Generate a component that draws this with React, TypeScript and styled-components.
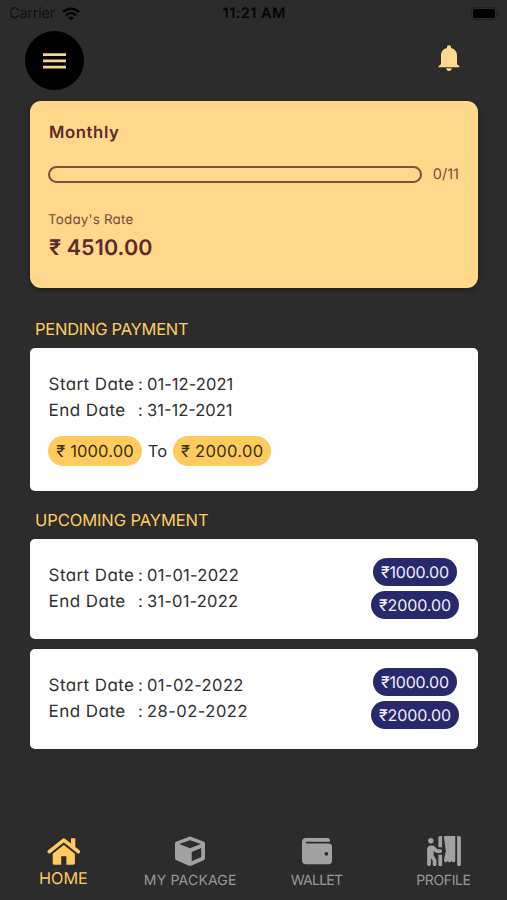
import React from 'react';
import styled, { createGlobalStyle } from 'styled-components';
import { FaPersonBooth, FaWallet } from 'react-icons/fa';

const GlobalStyle = createGlobalStyle`
  *, *::before, *::after { box-sizing: border-box; }
  body {
    margin: 0;
    background: #2c2c2c;
    font-family: Inter, 'Open Sans', sans-serif;
    font-feature-settings: 'cv11';
    text-rendering: geometricPrecision;
  }
`;

const Screen = styled.div`
  display: flex;
  flex-direction: column;
  width: 507px;
  height: 900px;
  overflow: hidden;
  background: #2c2c2c;
  color: #303030;
  white-space: pre;
`;

/* Text run with its own tracking; the trailing gap is cancelled. */
const Tracked = styled.span<{ $ls: number }>`
  letter-spacing: ${(p) => p.$ls}px;
  margin-right: ${(p) => -p.$ls}px;
`;

const StatusBar = styled.div`
  display: grid;
  grid-template-columns: 1fr auto 1fr;
  align-items: center;
  height: 27px;
  padding: 0 8px 0 9px;
  color: #050505;
  font-size: 14.5px;
  font-feature-settings: normal;
`;

const Carrier = styled.div`
  display: flex;
  align-items: center;
  gap: 7px;
  color: #111;
`;

const Clock = styled.div`
  font-size: 14.5px;
  font-weight: 600;
`;

const BatterySlot = styled.div`
  display: flex;
  justify-content: flex-end;
`;

const Header = styled.header`
  display: flex;
  justify-content: space-between;
  height: 74px;
  padding: 4px 47px 0 25px;
`;

const MenuButton = styled.button`
  display: flex;
  align-items: center;
  justify-content: center;
  width: 59px;
  height: 59px;
  padding: 0;
  border: 0;
  border-radius: 50%;
  background: #000;
`;

const BellButton = styled.button`
  display: flex;
  align-items: flex-start;
  height: 59px;
  padding: 14px 0 0;
  border: 0;
  background: none;
`;

const Content = styled.main`
  display: flex;
  flex-direction: column;
  padding: 0 29px 0 30px;
`;

const PlanCard = styled.section`
  display: flex;
  flex-direction: column;
  height: 187px;
  padding: 19px 19px 0 18px;
  border-radius: 11px;
  background: #ffd88c;
  color: #5c2a2b;
  box-shadow: 0 2px 5px rgba(0, 0, 0, 0.35);
`;

const PlanName = styled.h1`
  margin: 0;
  padding: 1px 0 0 1px;
  font-size: 16.7px;
  font-weight: 600;
  line-height: 24px;
`;

const ProgressRow = styled.div`
  display: flex;
  align-items: center;
  justify-content: space-between;
  height: 20px;
  margin-top: 19px;
`;

const ProgressTrack = styled.div`
  width: 374px;
  height: 17px;
  border: 2px solid #81503a;
  border-radius: 9px;
`;

const ProgressCount = styled.span`
  color: #7b4a3c;
  font-size: 14.5px;
`;

const RateLabel = styled.div`
  margin-top: 26px;
  color: #7b4a3c;
  font-size: 13.4px;
  line-height: 20px;
`;

const RateValue = styled.div`
  margin-top: 2px;
  padding-left: 1px;
  font-size: 21.5px;
  font-weight: 600;
  line-height: 32px;
`;

const SectionTitle = styled.h2<{ $top: number }>`
  margin: ${(p) => p.$top}px 0 0;
  padding: 0 0 6px 5px;
  color: #fdcc60;
  font-size: 16.5px;
  font-weight: 400;
  line-height: 25px;
`;

const PaymentCard = styled.section<{ $height: number }>`
  display: flex;
  justify-content: space-between;
  height: ${(p) => p.$height}px;
  padding: 23px 19px 0 18px;
  border-radius: 5px;
  background: #fff;

  & + & { margin-top: 10px; }
`;

const Dates = styled.dl`
  display: grid;
  grid-template-columns: 90px 9px auto;
  grid-auto-rows: 26px;
  align-content: start;
  margin: 0;
  font-size: 16.5px;
  line-height: 26px;
`;

const Term = styled.dt`
  margin: 0;
  padding: 1px 0 0 0.6px;
  font-size: 17px;
`;

const DateValue = styled.dd`
  margin: 0;
`;

const RangeRow = styled.div`
  display: flex;
  align-items: center;
  margin-top: 13px;
  font-size: 16.5px;
`;

const Joiner = styled.span`
  width: 31px;
  text-align: center;
`;

const AmountPill = styled.span<{ $width: number }>`
  display: flex;
  align-items: center;
  justify-content: center;
  width: ${(p) => p.$width}px;
  height: 30px;
  border-radius: 15px;
  background: #ffcb5c;
  color: #3d3018;
`;

const PillStack = styled.div`
  display: flex;
  flex-direction: column;
  align-items: center;
  gap: 5px;
  margin-top: -4px;
`;

const DuePill = styled.span<{ $width: number }>`
  display: flex;
  align-items: center;
  justify-content: center;
  width: ${(p) => p.$width}px;
  height: 28px;
  border-radius: 14px;
  background: #28286c;
  color: #f0effa;
  font-size: 16px;
`;

const TabBar = styled.nav`
  display: grid;
  grid-template-columns: repeat(4, 1fr);
  height: 64px;
  margin-top: auto;
`;

const Tab = styled.a<{ $active?: boolean }>`
  display: flex;
  flex-direction: column;
  align-items: center;
  gap: ${(p) => (p.$active ? 2 : 5)}px;
  color: ${(p) => (p.$active ? '#ffca60' : '#989898')};
  font-size: ${(p) => (p.$active ? 16.2 : 14)}px;
  line-height: 20px;

  svg {
    width: 34px;
    height: 30px;
    color: ${(p) => (p.$active ? '#ffca60' : '#a2a2a2')};
  }
`;

const WifiIcon = () => (
  <svg width="18" height="14" viewBox="0 0 18 14" fill="none" stroke="#050505">
    <path d="M1 5.1C5.5.7 12.5.7 17 5.1" strokeWidth="2.5" />
    <path d="M4 8.3c2.9-2.8 7.1-2.8 10 0" strokeWidth="2.3" />
    <path d="M9 13.6 6.1 10.7c1.7-1.6 4.1-1.6 5.8 0Z" fill="#050505" stroke="none" />
  </svg>
);

const BatteryIcon = () => (
  <svg width="29" height="13" viewBox="0 0 29 13">
    <rect x="1.500" y=".5" width="25" height="12" rx="3" fill="none" stroke="#222" />
    <rect x="3" y="2" width="22" height="9" rx="1.5" fill="#000" />
    <path d="M27.500 4.5c1.700.7 1.700 3.300 0 4Z" fill="#222" />
  </svg>
);

const MenuIcon = () => (
  <svg width="23" height="16" viewBox="0 0 23 16" fill="#f8d589">
    <path d="M0 .2h23v2.7H0zM0 6.5h23v2.7H0zM0 12.8h23v2.7H0z" />
  </svg>
);

const BellIcon = () => (
  <svg width="22" height="27" viewBox="0 0 22 27" fill="#ffd98f">
    <path d="M11 .3c1.300 0 2 .8 2 2v.7c3.800.9 6 3.700 6 7.500v7.500c0 1 .3 1.500 1 2.100l1.500 1.200v.9H.5v-.9L2 20.100c.7-.6 1-1.100 1-2.100v-7.500C3 6.700 5.200 3.900 9 3v-.7c0-1.200.7-2 2-2Z" />
    <path d="M8.200 23.200h5.600c-.2 1.800-1.200 2.700-2.800 2.700s-2.600-.9-2.800-2.700Z" />
  </svg>
);

const HomeIcon = () => (
  <svg viewBox="-0.8 -0.2 34 30" fill="currentColor">
    <path d="M2.500 15.400 17 3.900l14.500 11.500" fill="none" stroke="currentColor" strokeWidth="3.700" strokeLinejoin="round" strokeLinecap="round" />
    <path d="M24.200 2.100h4.300v9.800l-4.300-3.400Z" />
    <path d="M17 8.700 28.100 17.500v9.600q0 1.400-1.400 1.400h-7.100V20h-5.200v8.500H7.300q-1.400 0-1.400-1.400v-9.600Z" />
  </svg>
);

const PackageIcon = () => (
  <svg viewBox="0 0 34 30" fill="currentColor" fillRule="evenodd">
    <path d="M15.600.9q1.400-.6 2.800 0l12.100 4.500Q32 6 32 7.600v14.300q0 1.600-1.400 2.300l-12 5.200q-1.600.7-3.200 0l-12-5.200Q2 23.500 2 21.900V7.600Q2 6 3.500 5.400ZM17 4.300 6.200 8.100 17 12.200l10.800-4.100ZM18.700 16v9.300l9.500-4.300v-8.900Z" />
  </svg>
);

interface DateRowsProps {
  start: string;
  end: string;
  startTracking: number;
  endTracking: number;
}

const DateRows = ({ start, end, startTracking, endTracking }: DateRowsProps) => (
  <Dates>
    <Term><Tracked $ls={0.4}>Start Date</Tracked></Term>
    <span>:</span>
    <DateValue><Tracked $ls={startTracking}>{start}</Tracked></DateValue>
    <Term><Tracked $ls={0.45}>End Date</Tracked></Term>
    <span>:</span>
    <DateValue><Tracked $ls={endTracking}>{end}</Tracked></DateValue>
  </Dates>
);

const upcoming = [
  { start: '01-01-2022', end: '31-01-2022', startTracking: 0.25, endTracking: 0.2 },
  { start: '01-02-2022', end: '28-02-2022', startTracking: 0.4, endTracking: 0.5 },
];

export default function App() {
  return (
    <>
      <GlobalStyle />
      <Screen>
        <StatusBar>
          <Carrier><Tracked $ls={-0.2}>Carrier</Tracked><WifiIcon /></Carrier>
          <Clock><Tracked $ls={0.45}>11:21 AM</Tracked></Clock>
          <BatterySlot><BatteryIcon /></BatterySlot>
        </StatusBar>
        <Header>
          <MenuButton aria-label="Menu"><MenuIcon /></MenuButton>
          <BellButton aria-label="Notifications"><BellIcon /></BellButton>
        </Header>
        <Content>
          <PlanCard>
            <PlanName><Tracked $ls={0.6}>Monthly</Tracked></PlanName>
            <ProgressRow>
              <ProgressTrack />
              <ProgressCount>0/11</ProgressCount>
            </ProgressRow>
            <RateLabel><Tracked $ls={0.2}>Today's Rate</Tracked></RateLabel>
            <RateValue><Tracked $ls={0.1}>₹ 4510.00</Tracked></RateValue>
          </PlanCard>

          <SectionTitle $top={29}><Tracked $ls={-0.25}>PENDING PAYMENT</Tracked></SectionTitle>
          <PaymentCard $height={143}>
            <div>
              <DateRows start="01-12-2021" end="31-12-2021" startTracking={0.05} endTracking={0} />
              <RangeRow>
                <AmountPill $width={94}><Tracked $ls={0.15}>₹ 1000.00</Tracked></AmountPill>
                <Joiner>To</Joiner>
                <AmountPill $width={98}><Tracked $ls={0.33}>₹ 2000.00</Tracked></AmountPill>
              </RangeRow>
            </div>
          </PaymentCard>

          <SectionTitle $top={17}><Tracked $ls={-0.08}>UPCOMING PAYMENT</Tracked></SectionTitle>
          {upcoming.map((item) => (
            <PaymentCard key={item.start} $height={100}>
              <DateRows {...item} />
              <PillStack>
                <DuePill $width={84}><Tracked $ls={-0.19}>₹1000.00</Tracked></DuePill>
                <DuePill $width={88}><Tracked $ls={-0.08}>₹2000.00</Tracked></DuePill>
              </PillStack>
            </PaymentCard>
          ))}
        </Content>
        <TabBar>
          <Tab $active><HomeIcon /><Tracked $ls={0}>HOME</Tracked></Tab>
          <Tab><PackageIcon /><Tracked $ls={0.2}>MY PACKAGE</Tracked></Tab>
          <Tab><FaWallet /><Tracked $ls={-0.7}>WALLET</Tracked></Tab>
          <Tab><FaPersonBooth /><Tracked $ls={-0.4}>PROFILE</Tracked></Tab>
        </TabBar>
      </Screen>
    </>
  );
}
